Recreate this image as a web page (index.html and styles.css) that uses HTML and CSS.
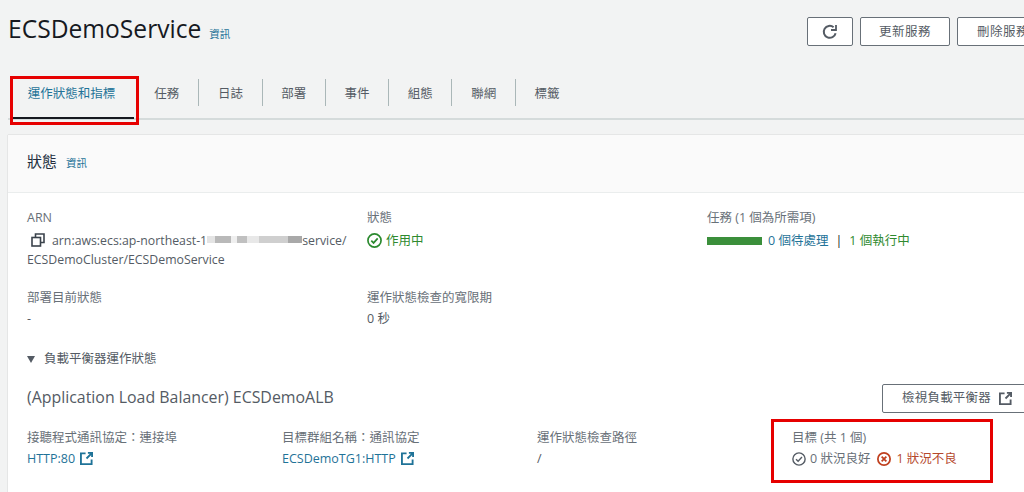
FILE: index.html
```html
<!DOCTYPE html>
<html lang="zh-Hant">
<head>
<meta charset="utf-8">
<title>ECSDemoService</title>
<link rel="stylesheet" href="styles.css">
</head>
<body>
<div class="page">
  <header class="head">
    <h1 class="title">ECSDemoService</h1>
    <a class="info title-info">資訊</a>
    <div class="actions">
      <button class="btn btn-icon" aria-label="重新整理">
        <svg width="16" height="16" viewBox="0 0 16 16" fill="none" stroke="#545b64" stroke-width="2"><path d="M13.6 9.2A6 6 0 1 1 11.6 3.2"/><path d="M14 1v5H9" fill="none" stroke-width="1.8"/></svg>
      </button>
      <button class="btn btn-update">更新服務</button>
      <button class="btn btn-delete">刪除服務</button>
    </div>
  </header>

  <nav class="tabs">
    <a class="tab active">運作狀態和指標</a>
    <a class="tab">任務</a>
    <a class="tab">日誌</a>
    <a class="tab">部署</a>
    <a class="tab">事件</a>
    <a class="tab">組態</a>
    <a class="tab">聯網</a>
    <a class="tab">標籤</a>
  </nav>

  <section class="card">
    <div class="card-head">
      <h2 class="card-title">狀態</h2>
      <a class="info">資訊</a>
    </div>
    <div class="card-body">
      <div class="grid3">
        <div class="field">
          <div class="label">ARN</div>
          <div class="value arn">
            <svg class="copy" width="14" height="14" viewBox="0 0 14 14" fill="none" stroke="#3b434c" stroke-width="1.6"><rect x="1" y="4.5" width="8.5" height="8.5"/><path d="M4.5 4.5V1H13v8.5H9.5"/></svg><span>arn:aws:ecs:ap-northeast-1</span><span class="blur"></span><span>service/</span><br>ECSDemoCluster/ECSDemoService
          </div>
        </div>
        <div class="field">
          <div class="label">狀態</div>
          <div class="value ok">
            <svg class="ico" width="15" height="15" viewBox="0 0 16 16" fill="none" stroke="#2b8a2f" stroke-width="1.8"><circle cx="8" cy="8" r="7"/><path d="M4.6 8.2l2.4 2.4 4.4-4.8"/></svg>作用中
          </div>
        </div>
        <div class="field">
          <div class="label">任務 (1 個為所需項)</div>
          <div class="value tasks">
            <span class="bar"></span><a class="link">0 個待處理</a><span class="sep">|</span><span class="green">1 個執行中</span>
          </div>
        </div>
        <div class="field row2">
          <div class="label">部署目前狀態</div>
          <div class="value">-</div>
        </div>
        <div class="field row2">
          <div class="label">運作狀態檢查的寬限期</div>
          <div class="value">0 秒</div>
        </div>
      </div>

      <div class="toggle"><span class="caret"></span>負載平衡器運作狀態</div>

      <div class="lb-head">
        <h3 class="lb-title">(Application Load Balancer) ECSDemoALB</h3>
        <button class="btn btn-lb">檢視負載平衡器
          <svg width="13" height="13" viewBox="0 0 14 14" fill="none" stroke="#545b64" stroke-width="2"><path d="M6 1.5H1v11.500h11.500V8"/><path d="M7 7L13 1M8.500 1H13v4.500"/></svg>
        </button>
      </div>

      <div class="grid4">
        <div class="field">
          <div class="label">接聽程式通訊協定：連接埠</div>
          <div class="value"><a class="link">HTTP:80<svg class="ext" width="13" height="13" viewBox="0 0 14 14" fill="none" stroke="#1f7398" stroke-width="2"><path d="M6 1.500H1v11.500h11.500V8"/><path d="M7 7L13 1M8.500 1H13v4.500"/></svg></a></div>
        </div>
        <div class="field">
          <div class="label">目標群組名稱：通訊協定</div>
          <div class="value"><a class="link">ECSDemoTG1:HTTP<svg class="ext" width="13" height="13" viewBox="0 0 14 14" fill="none" stroke="#1f7398" stroke-width="2"><path d="M6 1.500H1v11.500h11.500V8"/><path d="M7 7L13 1M8.500 1H13v4.500"/></svg></a></div>
        </div>
        <div class="field">
          <div class="label">運作狀態檢查路徑</div>
          <div class="value">/</div>
        </div>
        <div class="field">
          <div class="label">目標 (共 1 個)</div>
          <div class="value targets">
            <svg class="ico-t" width="14" height="14" viewBox="0 0 16 16" fill="none" stroke="#545b64" stroke-width="1.6"><circle cx="8" cy="8" r="7"/><path d="M4.600 8.200l2.400 2.400 4.400-4.800"/></svg><span class="muted">0 狀況良好</span>
            <svg class="ico-t bad-ico" width="14" height="14" viewBox="0 0 16 16" fill="none" stroke="#c0401f" stroke-width="2"><circle cx="8" cy="8" r="7"/><path d="M5.300 5.300l5.400 5.400M10.700 5.300l-5.400 5.400"/></svg><span class="bad">1 狀況不良</span>
          </div>
        </div>
      </div>
    </div>
  </section>

  <div class="mark mark-tab"></div>
  <div class="mark mark-target"></div>
</div>
</body>
</html>
```
FILE: styles.css
```css
* { box-sizing: border-box; }
html, body { margin: 0; height: 492px; overflow: hidden; }
body {
  background: #f2f3f3;
  color: #545b64;
  font-family: "Open Sans", "Noto Sans CJK TC", sans-serif;
  font-size: 12.5px;
  line-height: 18px;
}
.page { position: relative; width: 1024px; height: 492px; overflow: hidden; }
.head { display: flex; align-items: center; height: 60px; padding: 1px 0 0 8px; }
.title { margin: 0 0 3px; font-size: 24.6px; line-height: 30px; font-weight: 400; color: #16191f; }
.info { color: #1f7398; font-size: 10.5px; font-weight: 400; }
.title-info { margin: 7px 0 0 8px; }
.actions { display: flex; gap: 7px; margin: 2px -25px 0 auto; }
.btn {
  height: 29px; background: #fff; border: 1px solid #687078; border-radius: 2px;
  color: #545b64; font: inherit; letter-spacing: .5px; padding: 0;
  display: flex; align-items: center; justify-content: center;
}
.btn-icon { width: 46px; }
.btn-update { width: 90px; }
.btn-delete { width: 92px; }
.tabs {
  display: flex; align-items: center; height: 60px; margin: 0 0 0 8px;
  padding: 7px 0 0; border-bottom: 2px solid #d5dbdb;
}
.tab { width: 63.3px; text-align: center; height: 27px; padding-top: 2px; line-height: 26px; border-left: 1px solid #aab7b8; color: #545b64; }
.tab:nth-child(2) { border-left: 0; }
.tab.active { width: 127px; color: #1f7398; border-left: 0; position: relative; }
.tab.active::after {
  content: ""; position: absolute; left: 5px; right: 1px; top: 38px; height: 2px; background: #16191f;
}
.card { margin: 15px 0 0 8px; background: #fff; box-shadow: 0 0 1px rgba(0,0,0,.3); height: 360px; }
.card-head { display: flex; align-items: center; height: 58px; padding: 0 19px; border-bottom: 1px solid #eaeded; background: #fafafa; gap: 9px; }
.card-title { margin: 0 0 5px; font-size: 15px; font-weight: 400; color: #232f3e; }
.card-head .info { margin-bottom: 1px; }
.card-body { padding: 16px 19px 0; }
.grid3 { display: grid; grid-template-columns: repeat(3, 340px); }
.field .label { color: #687078; height: 18px; line-height: 18px; }
.value { line-height: 19px; }
.field .value { margin-top: 4px; }
.row2 { margin-top: 20px; }
.field.row2 .value { margin-top: 2px; }
.arn { white-space: nowrap; font-size: 12.3px; }
.copy { margin: 0 7px 0 4px; vertical-align: -2px; }
.blur {
  display: inline-block; width: 95px; height: 7px; vertical-align: 2px;
  background: linear-gradient(90deg, #e4e4e4 0 8%, #b9b9b9 8% 25%, #efefef 25% 32%, #c0c0c0 32% 42%, #e8e8e8 42% 55%, #cfcfcf 55% 85%, #a9a9a9 85% 100%);
}
.ok { color: #2f8a2f; display: flex; align-items: center; }
.ico { margin-right: 4px; }
.tasks { display: flex; align-items: center; }
.bar { width: 55px; height: 8px; background: #3b8f3b; margin-right: 6px; }
.link { color: #1f7398; display: inline-flex; align-items: center; }
.sep { margin: 0 7px; color: #16191f; }
.green { color: #2f8a2f; }
.ext { margin-left: 5px; }
.toggle { margin-top: 22px; display: flex; align-items: center; height: 18px; }
.caret { width: 0; height: 0; border: 4px solid transparent; border-top: 7px solid #545b64; border-bottom: 0; margin-right: 9px; }
.lb-head { display: flex; align-items: center; justify-content: space-between; margin-top: 15px; height: 30px; }
.lb-title { margin: 0 0 3px; font-size: 15.9px; font-weight: 400; color: #545b64; }
.btn-lb { flex: none; width: 150px; margin-right: -27px; gap: 8px; letter-spacing: .2px; }
.grid4 { display: grid; grid-template-columns: repeat(4, 255px); margin-top: 16px; }
.field .value.targets { margin-top: 2px; display: flex; align-items: center; }
.grid4 .field .value { margin-top: 2px; }
.muted { color: #687078; margin-left: 4px; }
.bad-ico { margin-left: 7px; }
.bad { color: #b5482c; margin-left: 5px; }
.mark { position: absolute; border: 3px solid #e60000; pointer-events: none; }
.mark-tab { left: 10px; top: 76px; width: 129px; height: 49px; }
.mark-target { left: 771px; top: 419px; width: 222px; height: 64px; }
```
